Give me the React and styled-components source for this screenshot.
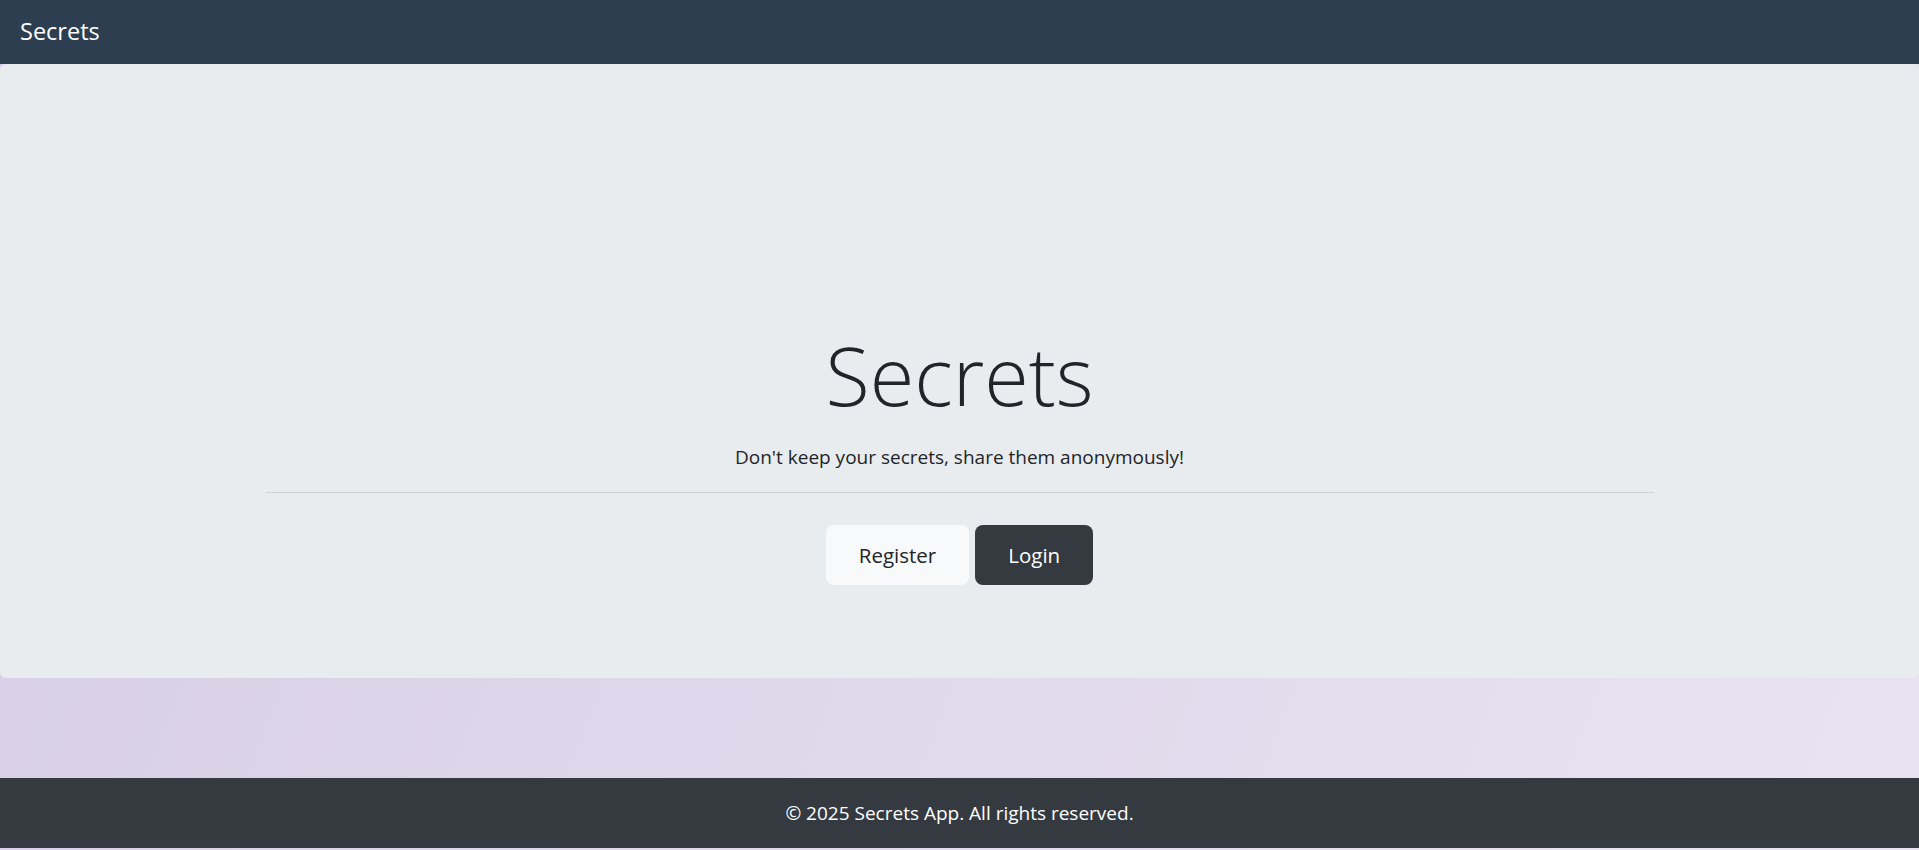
import React from 'react';
import styled, { createGlobalStyle } from 'styled-components';

const GlobalStyle = createGlobalStyle`
  * {
    box-sizing: border-box;
  }

  body {
    margin: 0;
    font-family: 'Open Sans', 'Noto Sans', sans-serif;
    color: #212529;
    background: linear-gradient(110deg, #d6cde5 0%, #e9e3f1 100%);
    min-height: 100vh;
  }
`;

const Page = styled.div`
  display: flex;
  flex-direction: column;
  height: 848px;
`;

const Navbar = styled.nav`
  height: 64px;
  background-color: #2c3e50;
  display: flex;
  align-items: center;
  padding: 0 20px;
`;

const Brand = styled.a`
  color: #fff;
  font-size: 23.5px;
  text-decoration: none;
  line-height: 1;
`;

const Jumbotron = styled.section`
  height: 614px;
  background-color: #e9ecef;
  border-radius: 6px;
  padding-top: 262px;
  text-align: center;
`;

const Container = styled.div`
  width: 1388px;
  margin: 0 auto;

  .display {
    margin: 0;
    font-size: 81px;
    font-weight: 300;
    line-height: 1.2;
  }

  .lead {
    margin: 20px 0 0;
    font-size: 19px;
    line-height: 1.5;
  }

  hr {
    margin: 20px 0 32px;
    border: 0;
    border-top: 1px solid #cfd2d5;
  }
`;

const Actions = styled.div`
  display: flex;
  justify-content: center;
  gap: 6px;
`;

const Button = styled.a`
  display: inline-flex;
  align-items: center;
  justify-content: center;
  height: 60px;
  padding: 0 33px;
  border-radius: 8px;
  font-size: 20.5px;
  text-decoration: none;
  background-color: ${(p) => (p.$dark ? '#343a40' : '#f8f9fa')};
  color: ${(p) => (p.$dark ? '#fff' : '#212529')};
  cursor: pointer;
`;

const Spacer = styled.div`
  flex: 1;
`;

const Footer = styled.footer`
  height: 70px;
  background-color: #343a40;
  color: #fff;
  display: flex;
  align-items: center;
  justify-content: center;
  font-size: 19px;
`;

export default function App() {
  return (
    <>
      <GlobalStyle />
      <Page>
        <Navbar>
          <Brand href="#">Secrets</Brand>
        </Navbar>
        <Jumbotron>
          <Container>
            <h1 className="display">Secrets</h1>
            <p className="lead">Don't keep your secrets, share them anonymously!</p>
            <hr />
            <Actions>
              <Button>Register</Button>
              <Button $dark>Login</Button>
            </Actions>
          </Container>
        </Jumbotron>
        <Spacer />
        <Footer>© 2025 Secrets App. All rights reserved.</Footer>
      </Page>
    </>
  );
}
